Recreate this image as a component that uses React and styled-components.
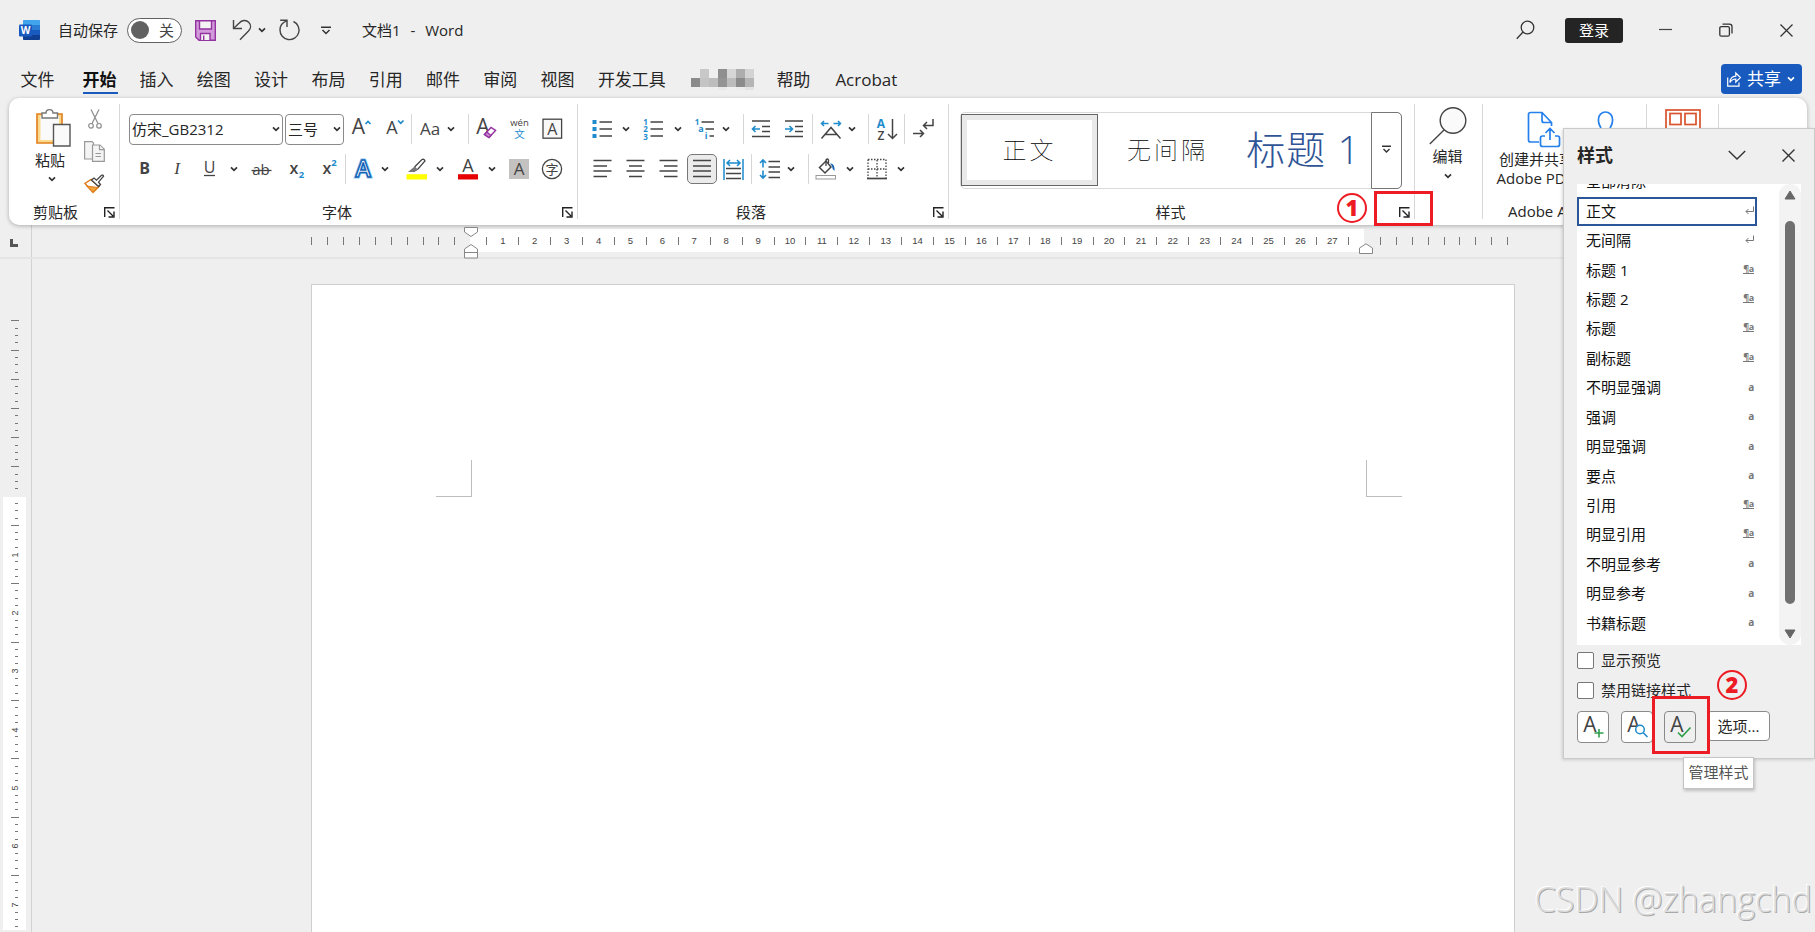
import React from 'react';
import styled, { createGlobalStyle } from 'styled-components';

const GlobalStyle = createGlobalStyle`
  * { box-sizing: border-box; }
  body {
    margin: 0;
    overflow: hidden;
    background: #efefef;
    color: #262626;
    font-family: "Open Sans", "Noto Sans CJK SC", sans-serif;
    font-size: 15px;
  }
  svg { display: block; flex: none; overflow: visible; }
  svg text { font-family: "Open Sans", "Noto Sans CJK SC", sans-serif; }
`

const Window = styled.div`
  position: relative;
  width: 1815px;
  height: 932px;
  overflow: hidden;
  display: flex;
  flex-direction: column;
`
/* keeps an item on its place in a bar: the gap before it and its width */
const Cell = styled.div`
  display: flex;
  flex: none;
  align-items: center;
  justify-content: ${p => p.$start ? 'flex-start' : 'center'};
  margin-left: ${p => p.$ml || 0}px;
  width: ${p => p.$w ? p.$w + 'px' : 'auto'};
  padding-bottom: ${p => p.$up || 0}px;
  white-space: nowrap;
  word-spacing: ${p => p.$wide ? '6px' : 'normal'};
`

const ChevronSvg = ({ w = 8, color = '#333', sw = 1.7 }) => (
  <svg width={w} height={w} viewBox="0 0 8 8">
    <path d="M1 2.4 L4 5.4 L7 2.4" fill="none" stroke={color} strokeWidth={sw} />
  </svg>
)
const Chevron = ({ ml }) => <Cell $ml={ml} $w={8}><ChevronSvg /></Cell>

const Icon = ({ ml, children, size = 22 }) => (
  <Cell $ml={ml} $w={size}>
    <svg width={size} height={size} viewBox={`0 0 ${size} ${size}`} fill="none" stroke="#444" strokeWidth="1.3">
      {children}
    </svg>
  </Cell>
)
const T = ({ x, y, s = 18, c = '#444', w = 400, children, ...rest }) => (
  <text x={x} y={y} fontSize={s} fill={c} fontWeight={w} stroke="none" textAnchor="middle" {...rest}>{children}</text>
)

/* ---------- title bar ---------- */
const TitleRow = styled.div`
  display: flex;
  align-items: center;
  height: 60px;
  flex: none;
`
const Toggle = styled.div`
  display: flex;
  align-items: center;
  justify-content: space-between;
  width: 55px;
  height: 25px;
  margin-left: 9px;
  padding: 0 7px 1px 3px;
  border: 1px solid #616161;
  border-radius: 13px;
  background: #fff;
  color: #444;
  i { width: 18px; height: 18px; margin-top: 1px; border-radius: 50%; background: #616161; }
`
const Login = styled.div`
  width: 58px;
  height: 25px;
  line-height: 24px;
  margin-left: 30px;
  border-radius: 3px;
  background: #242424;
  color: #fff;
  text-align: center;
`

const TitleBar = () => (
  <TitleRow>
    <Cell $ml={19} $w={21}>
      <svg width="21" height="22" viewBox="0 0 21 22">
        <rect x="4" y="1" width="17" height="20" rx="1.5" fill="#185abd" />
        <path d="M4 6.3V2.5Q4 1 5.5 1H19.5Q21 1 21 2.5V6.3Z" fill="#41a5ee" />
        <rect x="4" y="6" width="17" height="5" fill="#2b7cd3" />
        <path d="M4 16H21V19.5Q21 21 19.5 21H5.5Q4 21 4 19.5Z" fill="#103f91" />
        <rect x="0" y="5.5" width="13" height="12" rx="1.2" fill="#185abd" />
        <text x="6.5" y="15" fontSize="10" fontWeight="700" fill="#fff" textAnchor="middle">W</text>
      </svg>
    </Cell>
    <Cell $ml={18} $w={60} $up={2}>自动保存</Cell>
    <Toggle><i />关</Toggle>
    <Cell $ml={13} $w={21}>
      <svg width="21" height="21" viewBox="0 0 21 21" fill="#d29ada" stroke="#9332a0" strokeWidth="1.4">
        <path d="M.7 .7H20.3V20.3H4L.7 17Z" />
        <path d="M4.5 .7H16.5V9H4.5Z" fill="#f3f3f3" />
        <path d="M5.5 20V13.5H15V20" fill="#f3f3f3" />
        <path d="M8.7 15.5V20" />
      </svg>
    </Cell>
    <Cell $ml={16} $w={20}>
      <svg width="20" height="22" viewBox="0 0 20 22" fill="none" stroke="#444" strokeWidth="1.4">
        <path d="M1.5 1V9.5H10" />
        <path d="M1.5 9.5L7 4.2C10 1 14 .6 16.7 3.2C19.3 5.8 19 9.5 16.5 12L8 20.8" />
      </svg>
    </Cell>
    <Chevron ml={6} />
    <Cell $ml={13} $w={21}>
      <svg width="21" height="22" viewBox="0 0 21 22" fill="none" stroke="#444" strokeWidth="1.4">
        <path d="M1.2 1.3H8V8" />
        <path d="M8 1.8C3.5 3.2 1 7 1 11A9.5 9.5 0 1 0 14.5 2.5" />
      </svg>
    </Cell>
    <Cell $ml={21} $w={10}>
      <svg width="10" height="9" viewBox="0 0 10 9" fill="none" stroke="#333" strokeWidth="1.5">
        <path d="M0 1.2H10M1.5 4L5 7.5L8.5 4" />
      </svg>
    </Cell>
    <Cell $ml={31} $w={104} $up={2} $start $wide>文档1 - Word</Cell>
    <Cell $ml={1050} $w={19}>
      <svg width="19" height="20" viewBox="0 0 19 20" fill="none" stroke="#333" strokeWidth="1.3">
        <circle cx="11.5" cy="7.5" r="6.3" /><path d="M7 12L.8 18.8" />
      </svg>
    </Cell>
    <Login>登录</Login>
    <Cell $ml={36} $w={13}><svg width="13" height="2"><path d="M0 .5H13" stroke="#444" strokeWidth="1.2" /></svg></Cell>
    <Cell $ml={47} $w={14}>
      <svg width="14" height="14" viewBox="0 0 14 14" fill="none" stroke="#333" strokeWidth="1.3">
        <rect x=".8" y="3.6" width="9.6" height="9.6" rx="1.5" />
        <path d="M3.5 1.2H10.5Q13 1.2 13 3.6V10.5" />
      </svg>
    </Cell>
    <Cell $ml={47} $w={13}>
      <svg width="13" height="13" viewBox="0 0 13 13" stroke="#333" strokeWidth="1.3"><path d="M.5 .5L12.5 12.5M12.5 .5L.5 12.5" /></svg>
    </Cell>
  </TitleRow>
)

/* ---------- tabs ---------- */
const TabRow = styled.div`
  display: flex;
  height: 38px;
  flex: none;
  font-size: 17px;
  line-height: 40px;
`
const Tab = styled.div`
  margin-left: ${p => p.$ml ?? 23.3}px;
  width: ${p => p.$w || 34}px;
  white-space: nowrap;
  ${p => p.$active && `
    height: 34px;
    border-bottom: 2px solid #185abd;
    font-weight: 700;
    color: #111;
  `}
`
const Mosaic = styled.div`
  display: grid;
  grid-template-columns: repeat(7, 9px);
  grid-auto-rows: 9px;
  margin: 9px 0 0 25.5px;
  i:nth-child(n + 15) { height: 3px; }
`
const mosaicColors = [
  '#efefef', '#c8c8c8', '#efefef', '#8f8f8f', '#d6d6d6', '#adadad', '#d3d3d3',
  '#8b8b8b', '#c4c4c4', '#bdbdbd', '#949494', '#bcbcbc', '#8b8b8b', '#b5b5b5',
  '#efefef', '#efefef', '#efefef', '#e9e9e9', '#efefef', '#ececec', '#e3e3e3',
]
const Share = styled.div`
  display: flex;
  align-items: center;
  width: 81px;
  height: 30px;
  margin: 4px 13px 0 auto;
  padding-left: 6px;
  border-radius: 4px;
  background: #185abd;
  color: #fff;
  line-height: 28px;
  gap: 6px;
`

const TabBar = () => (
  <TabRow>
    <Tab $ml={20.5}>文件</Tab>
    <Tab $ml={28} $w={35} $active>开始</Tab>
    <Tab $ml={22}>插入</Tab>
    {['绘图', '设计', '布局', '引用', '邮件', '审阅', '视图'].map(t => <Tab key={t}>{t}</Tab>)}
    <Tab $w={68}>开发工具</Tab>
    <Mosaic>{mosaicColors.map((c, i) => <i key={i} style={{ background: c }} />)}</Mosaic>
    <Tab $ml={22}>帮助</Tab>
    <Tab $ml={25} $w={70}>Acrobat</Tab>
    <Share>
      <svg width="14" height="15" viewBox="0 0 14 15" fill="none" stroke="#fff" strokeWidth="1.2">
        <path d="M.7 5.5V14.2H12V10.5" />
        <path d="M3 10.5C3.2 6.5 5.5 4.4 8.8 4.2V1L13.4 5.6L8.8 10V7C6 7 4.5 8 3 10.5Z" />
      </svg>
      共享
      <ChevronSvg color="#fff" />
    </Share>
  </TabRow>
)

/* ---------- ribbon ---------- */
const RibbonBox = styled.div`
  display: flex;
  width: 1798px;
  height: 127px;
  flex: none;
  margin-left: 9px;
  padding: 6px 0;
  border-radius: 10px;
  background: #fff;
  box-shadow: 0 1px 4px rgba(0, 0, 0, .28);
  z-index: 1;
`
const Group = styled.div`
  display: flex;
  flex-direction: column;
  flex: none;
  width: ${p => p.$w}px;
  height: 115px;
  border-right: 1px solid #d8d8d8;
`
const Body = styled.div`
  display: flex;
  flex: none;
  flex-direction: ${p => p.$column ? 'column' : 'row'};
  height: 97px;
`
const Footer = styled.div`
  display: flex;
  flex: none;
  align-items: center;
  height: 20px;
  margin-top: ${p => p.$mt || 0}px;
`
const Row = styled.div`
  display: flex;
  align-items: center;
  height: 30px;
  margin-top: ${p => p.$mt}px;
`
const Sep = styled.div`
  width: 1px;
  height: 30px;
  margin-left: ${p => p.$ml}px;
  background: #d6d6d6;
`
const Big = styled.div`
  display: flex;
  flex-direction: column;
  align-items: center;
  flex: none;
  margin-left: ${p => p.$ml}px;
  width: ${p => p.$w}px;
  padding-top: ${p => p.$pt}px;
  line-height: 19px;
  white-space: nowrap;
`
const BigText = styled.span`
  margin-top: ${p => p.$mt || 0}px;
  margin-right: ${p => p.$mr || 0}px;
`
const Combo = styled.div`
  display: flex;
  align-items: center;
  justify-content: space-between;
  width: ${p => p.$w}px;
  height: 31px;
  margin-left: ${p => p.$ml}px;
  padding: 0 2px 1px 2px;
  border: 1px solid #8a8a8a;
  border-radius: 4px;
`
const Pressed = styled.div`
  display: flex;
  align-items: center;
  justify-content: center;
  width: 30px;
  height: 30px;
  margin-left: 7px;
  border: 1px solid #777;
  border-radius: 5px;
  background: #ebebeb;
`
const LauncherCell = styled(Cell)`
  padding-top: 3px;
`

const Launcher = ({ ml }) => (
  <LauncherCell $ml={ml} $w={11}>
    <svg width="11" height="11" viewBox="0 0 11 11" fill="none" stroke="#222" strokeWidth="1.4">
      <path d="M.7 10V.7H10.5M3.5 3.5L9 9M10 4.5V10H4.5" />
    </svg>
  </LauncherCell>
)

const Clipboard = () => (
  <Group $w={111}>
    <Body>
      <Big $ml={24} $w={40} $pt={4}>
        <svg width="36" height="40" viewBox="0 0 36 40" fill="none">
          <path d="M2 6H27V35H2Z" fill="#fbd98d" stroke="#e07d1a" strokeWidth="1.6" />
          <path d="M5.5 8H24V32H5.5Z" fill="#fafafa" />
          <path d="M7 10V5H11C11 .5 18 .5 18 5H22.5V10Z" fill="#fff" stroke="#777" strokeWidth="1.4" />
          <path d="M18.5 16.5H35V38H18.5Z" fill="#fafafa" stroke="#555" strokeWidth="1.4" />
        </svg>
        <BigText $mt={3} $mr={6}>粘贴</BigText>
        <BigText $mt={5} $mr={3}><ChevronSvg /></BigText>
      </Big>
      <Big $ml={11} $w={21} $pt={5}>
        <svg width="14" height="20" viewBox="0 0 14 20" fill="none" stroke="#8c8c8c" strokeWidth="1.2">
          <path d="M3 .5L10 14.5M11 .5L4 14.5" /><circle cx="3" cy="16.8" r="2.3" /><circle cx="11" cy="16.8" r="2.3" />
        </svg>
        <svg width="21" height="21" viewBox="0 0 21 21" fill="#f4f4f4" stroke="#999" strokeWidth="1.2" style={{ marginTop: 12 }}>
          <path d="M.6 .6H8L9.5 2V18H.6Z" />
          <path d="M8.5 4H16L20.3 8.3V20.3H8.5Z" /><path d="M15.5 4V8.7H20M11.5 12.5H17M11.5 15.5H17" />
        </svg>
        <svg width="21" height="20" viewBox="0 0 21 20" fill="none" style={{ marginTop: 12 }}>
          <path d="M7 5.5L1 9.5L9 18.3L15 12.5Z" fill="#fff" stroke="#e07d1a" strokeWidth="1.5" />
          <path d="M2.5 12L13.5 13.5L9 18Z" fill="#f2a33a" stroke="#e07d1a" />
          <path d="M7.5 6L10 4L12.5 6.2L17.5 1.3Q19 .6 19.6 2.2L14.5 8.2L16.5 10.5L14.5 12.5Z" fill="#fff" stroke="#444" strokeWidth="1.3" />
        </svg>
      </Big>
    </Body>
    <Footer><Cell $ml={24} $w={45}>剪贴板</Cell><Launcher ml={26} /></Footer>
  </Group>
)

const FontGroup = () => (
  <Group $w={458}>
    <Body $column>
      <Row $mt={10}>
        <Combo $ml={9} $w={154}>仿宋_GB2312<ChevronSvg /></Combo>
        <Combo $ml={2} $w={59}>三号<ChevronSvg /></Combo>
        <Icon ml={7}><T x={7.5} y={16} s={21}>A</T><path d="M14.5 6L17 3.5L19.5 6" stroke="#1e8bcd" strokeWidth="1.7" /></Icon>
        <Icon ml={12}><T x={7} y={16} s={18}>A</T><path d="M13 2.5L15.8 5.3L18.5 2.5" stroke="#1e8bcd" strokeWidth="1.7" /></Icon>
        <Sep $ml={4} />
        <Icon ml={7}><T x={11} y={17} s={17}>Aa</T></Icon>
        <Chevron ml={6} />
        <Sep $ml={13} />
        <Icon ml={6}>
          <T x={8} y={16} s={21}>A</T>
          <path d="M9.5 16.5L16 9.5L20.5 12.5L14 19.5Z" fill="#fff" stroke="#9332a0" strokeWidth="1.5" />
          <path d="M9.5 16.5L11.8 14L16 17.5L14 19.5Z" fill="#c98bd2" stroke="#9332a0" />
        </Icon>
        <Icon ml={12}><T x={10.5} y={8} s={9.5}>wén</T><T x={10.5} y={20} s={10.5} c="#1e8bcd">文</T></Icon>
        <Icon ml={10}><rect x="2" y="1.2" width="18.6" height="19" fill="#f8f8f8" /><T x={11.3} y={16.5} s={16}>A</T></Icon>
      </Row>
      <Row $mt={10}>
        <Icon ml={13}><T x={11.5} y={16} s={16} w={700}>B</T></Icon>
        <Icon ml={11}><T x={11} y={16} s={17} style={{ fontFamily: 'Liberation Serif', fontStyle: 'italic' }}>I</T></Icon>
        <Icon ml={11}><T x={10.5} y={15} s={16}>U</T><path d="M5 17.5H16" /></Icon>
        <Chevron ml={9} />
        <Icon ml={12}><T x={11} y={16.5} s={15}>ab</T><path d="M1.5 12.5H21.5" /></Icon>
        <Icon ml={14}><T x={8} y={16} s={16} w={600}>x</T><T x={15.5} y={20} s={9.5} w={700} c="#1e8bcd">2</T></Icon>
        <Icon ml={11}><T x={8} y={16} s={16} w={600}>x</T><T x={15} y={7.5} s={9.5} w={700} c="#1e8bcd">2</T></Icon>
        <Sep $ml={4} />
        <Icon ml={6}>
          <text x="11" y="18.5" fontSize="23" fontWeight="600" textAnchor="middle" fill="#fff" stroke="#8cc8f0" strokeWidth="3">A</text>
          <text x="11" y="18.5" fontSize="23" fontWeight="600" textAnchor="middle" fill="#fff" stroke="#1463b5" strokeWidth="1.5">A</text>
        </Icon>
        <Chevron ml={7} />
        <Icon ml={17}>
          <path d="M.5 16.2H21V21.5H.5Z" fill="#ff0" stroke="none" />
          <path d="M9 8.5L16 1.5Q18 .6 19 3L12 11L8 13Z" fill="#fff" />
          <path d="M8.5 8.5L12 11.5L8.5 14H2Z" fill="#777" stroke="none" />
        </Icon>
        <Chevron ml={8} />
        <Icon ml={13}><T x={11} y={14} s={18}>A</T><path d="M1 16.2H21V21.5H1Z" fill="#e60000" stroke="none" /></Icon>
        <Chevron ml={9} />
        <Icon ml={12}><rect x="1" y="1" width="20" height="20" fill="#c4c2c0" stroke="none" /><T x={11} y={17} s={17}>A</T></Icon>
        <Icon ml={11}><circle cx="11" cy="11" r="9.6" /><T x={11} y={16} s={13}>字</T></Icon>
      </Row>
    </Body>
    <Footer><Cell $ml={202} $w={30}>字体</Cell><Launcher ml={210} /></Footer>
  </Group>
)

const blue = '#1e8bcd'
const Paragraph = () => (
  <Group $w={371}>
    <Body $column>
      <Row $mt={10}>
        <Icon ml={13}>
          <path d="M8.5 4H21M8.5 11H21M8.5 18H21" />
          <path d="M1.5 2H5.5V6H1.5ZM1.5 9H5.5V13H1.5ZM1.5 16H5.5V20H1.5Z" fill={blue} stroke="none" />
        </Icon>
        <Chevron ml={9} />
        <Icon ml={12}>
          <path d="M8.5 4H21M8.5 11H21M8.5 18H21" />
          <T x={3.5} y={7} s={8} w={700} c={blue}>1</T><T x={3.5} y={14} s={8} w={700} c={blue}>2</T><T x={3.5} y={21.5} s={8} w={700} c={blue}>3</T>
        </Icon>
        <Chevron ml={10} />
        <Icon ml={12}>
          <path d="M7.5 4H20M11.5 11H20M15.5 18H20" />
          <T x={3} y={7} s={8} w={700} c={blue}>1</T><T x={7} y={14} s={9} w={700} c={blue}>a</T><T x={12} y={21} s={9} w={700} c={blue}>i</T>
        </Icon>
        <Chevron ml={6} />
        <Sep $ml={13} />
        <Icon ml={6}>
          <path d="M2 3H20M12 8.5H20M12 13.5H20M2 18.5H20" /><path d="M10 11H2.5M5.5 8L2.5 11L5.5 14" stroke={blue} strokeWidth="1.6" />
        </Icon>
        <Icon ml={11}>
          <path d="M2 3H20M12 8.5H20M12 13.5H20M2 18.5H20" /><path d="M2 11H9.5M6.5 8L9.5 11L6.5 14" stroke={blue} strokeWidth="1.6" />
        </Icon>
        <Sep $ml={7} />
        <Icon ml={7}>
          <path d="M1.5 20.5L11 9.5L20.5 20.5M5 16.5H17" strokeWidth="1.5" />
          <path d="M8.5 5.5H1.5M4 3L1.5 5.5L4 8M13.5 5.5H20.5M18 3L20.5 5.5L18 8" stroke={blue} strokeWidth="1.5" />
        </Icon>
        <Chevron ml={6} />
        <Sep $ml={12} />
        <Icon ml={6}>
          <T x={6} y={9.5} s={12} w={700} c={blue}>A</T><T x={6} y={21.5} s={12} w={600}>Z</T>
          <path d="M17.5 1V20.5M13 16L17.5 20.5L22 16" strokeWidth="1.5" />
        </Icon>
        <Sep $ml={7} />
        <Icon ml={7}>
          <path d="M21 1V7.5H11.5M15 4L11.5 7.5L15 11M1 15.500H11.5M8 12L11.5 15.500L8 19" strokeWidth="1.5" />
        </Icon>
      </Row>
      <Row $mt={10}>
        <Icon ml={14}><path d="M1.5 2.5H19.5M1.5 8H15M1.5 13H19.5M1.5 18.5H15" /></Icon>
        <Icon ml={11}><path d="M1.5 2.5H19.5M4 8H17M1.5 13H19.5M4 18.5H17" /></Icon>
        <Icon ml={11}><path d="M1.5 2.5H19.5M6 8H19.5M1.5 13H19.5M6 18.5H19.5" /></Icon>
        <Pressed><Icon><path d="M2 2.5H20M2 8H20M2 13H20M2 18.5H20" /></Icon></Pressed>
        <Icon ml={6}>
          <path d="M3 10.5H18M3 15.5H18M3 20.5H18" /><path d="M1 1V22M20 1V22M4 5H17M7 2L4 5L7 8M14 2L17 5L14 8" stroke={blue} strokeWidth="1.5" />
        </Icon>
        <Sep $ml={6} />
        <Icon ml={7}>
          <path d="M9.5 3.5H21M9.5 9H21M9.5 14H21M9.5 19.5H21" />
          <path d="M4 2V9.5M1 5L4 2L7 5M4 12.5V20M1 17L4 20L7 17" stroke={blue} strokeWidth="1.6" />
        </Icon>
        <Chevron ml={6} />
        <Sep $ml={13} />
        <Icon ml={6}>
          <path d="M4.5 9.5L11 3L16 9L10 15Z" fill="#fff" strokeWidth="1.5" /><path d="M11 8V2Q12.5 0 13.5 2V5" />
          <path d="M15 5.5Q20 5 19.5 13Q17 11 17 8Z" fill="#1463b5" stroke="none" />
          <rect x="1" y="17.5" width="19.5" height="3.5" fill="#fff" stroke="#999" strokeWidth="1" />
        </Icon>
        <Chevron ml={9} />
        <Icon ml={12}>
          <path d="M2 1.5H20V20M2 1.5V20M11 2V19M2 11H20" strokeDasharray="1.5 1.5" /><path d="M1 20.5H21" strokeWidth="1.7" />
        </Icon>
        <Chevron ml={9} />
      </Row>
    </Body>
    <Footer><Cell $ml={158} $w={30}>段落</Cell><Launcher ml={167} /></Footer>
  </Group>
)

const Gallery = styled.div`
  display: flex;
  flex: none;
  width: 442px;
  height: 77px;
  margin: 8px 0 0 11px;
  border: 1px solid #d9d9d9;
  border-radius: 5px;
`
const StyleTile = styled.div`
  display: flex;
  flex: none;
  align-items: center;
  justify-content: center;
  width: ${p => p.$w}px;
  height: 72px;
  margin-top: 1px;
  padding-bottom: ${p => p.$heading ? 7 : 3}px;
  font-size: ${p => p.$heading ? 39 : 24}px;
  font-weight: ${p => p.$heading ? 300 : 100};
  letter-spacing: ${p => p.$heading ? 1 : 3}px;
  color: ${p => p.$heading ? '#2f5496' : '#000'};
  white-space: nowrap;
  ${p => p.$selected && `
    border: 1px solid #666;
    box-shadow: inset 0 0 0 5px #e9e9e9;
  `}
`
const More = styled.div`
  display: flex;
  align-items: center;
  justify-content: center;
  width: 31px;
  height: 77px;
  margin: -1px -1px 0 auto;
  padding-bottom: 2px;
  border: 1px solid #777;
  border-radius: 0 5px 5px 0;
`

const Styles = () => (
  <Group $w={466}>
    <Gallery>
      <StyleTile $w={137} $selected>正文</StyleTile>
      <StyleTile $w={139}>无间隔</StyleTile>
      <StyleTile $w={133} $heading>标题 1</StyleTile>
      <More>
        <svg width="9" height="9" viewBox="0 0 9 9" fill="none" stroke="#333" strokeWidth="1.4"><path d="M0 1.2H9M1.5 4L4.5 7L7.5 4" /></svg>
      </More>
    </Gallery>
    <Footer $mt={12}><Cell $ml={206} $w={31}>样式</Cell><Launcher ml={213} /></Footer>
  </Group>
)

const RightGroups = () => (
  <>
    <Group $w={68}>
      <Big $ml={14} $w={38} $pt={3}>
        <svg width="38" height="38" viewBox="0 0 38 38" fill="none" stroke="#444" strokeWidth="1.4">
          <circle cx="24" cy="13.5" r="12.8" fill="#fafafa" /><path d="M15 23L.8 37" />
        </svg>
        <BigText $mt={2} $mr={1}>编辑</BigText>
        <BigText $mt={6}><ChevronSvg /></BigText>
      </Big>
    </Group>
    <Group $w={164}>
      <Body>
        <Big $ml={8} $w={106} $pt={7}>
          <svg width="34" height="37" viewBox="0 0 34 37" fill="none" stroke="#2680eb" strokeWidth="1.7">
            <path d="M12 31H3.5Q1.5 31 1.5 29V3.5Q1.5 1.500 3.5 1.5H15L24.5 11.5V15M15 1.5V9.5Q15 11.5 17 11.5H24.5" />
            <path d="M18 25H15.5Q13.5 25 13.5 27V33.5Q13.5 35.5 15.5 35.5H30.5Q32.5 35.5 32.5 33.5V27Q32.5 25 30.5 25H28M23 29V18M18.5 22L23 17.5L27.5 22" />
          </svg>
          <BigText $mt={2}>创建并共享的</BigText>
          <BigText $mr={18}>Adobe PDF</BigText>
        </Big>
        <svg width="17" height="36" viewBox="0 0 17 36" fill="none" stroke="#2680eb" strokeWidth="1.7" style={{ marginTop: 7 }}>
          <path d="M4 17Q1 12 1.5 8A7 7 0 0 1 15.5 8Q16 12 13 17" />
        </svg>
      </Body>
      <Footer><Cell $ml={25}>Adobe Acrobat</Cell></Footer>
    </Group>
    <Group $w={72}>
      <Cell $ml={18} $w={36}>
        <svg width="36" height="40" viewBox="0 0 36 40" fill="none" stroke="#d9532c" strokeWidth="1.7" style={{ marginTop: 5 }}>
          <rect x="1" y="1" width="34" height="36" /><rect x="5" y="4.5" width="11" height="11" /><rect x="20" y="4.5" width="11" height="11" />
        </svg>
      </Cell>
    </Group>
  </>
)

const Ribbon = () => (
  <RibbonBox>
    <Clipboard />
    <FontGroup />
    <Paragraph />
    <Styles />
    <RightGroups />
  </RibbonBox>
)

/* ---------- workspace ---------- */
const Workspace = styled.div`
  display: flex;
  flex-direction: column;
  flex: 1;
  min-height: 0;
`
const TopRuler = styled.div`
  display: flex;
  height: 34px;
  flex: none;
  border-bottom: 2px solid #e4e4e4;
`
const Corner = styled.div`
  width: 32px;
  border-right: 1px solid #d2d2d2;
  padding: 14px 0 0 10px;
  i {
    display: block;
    width: 8px;
    height: 8px;
    border-left: 3px solid #555;
    border-bottom: 3px solid #555;
  }
`
const Scale = styled.div`
  display: flex;
  align-items: center;
  width: 1240px;
  height: 23px;
  margin: 4px 0 0 271.4px;
  background: linear-gradient(to right, transparent 167px, #fff 167px, #fff 1061px, transparent 1061px);
`
const Mark = styled.div`
  display: flex;
  justify-content: center;
  flex: none;
  width: 15.966px;
  font: 9.5px "Liberation Sans", sans-serif;
  color: #444;
  i { width: 1px; height: 8px; background: #777; }
`
const Indent = styled.svg`
  position: absolute;
  left: ${p => p.$x}px;
  top: ${p => p.$y}px;
  z-index: 1;
`
const Canvas = styled.div`
  display: flex;
  flex: 1;
  min-height: 0;
`
const SideRuler = styled.div`
  width: 32px;
  padding: 58.35px 0 0 3px;
  border-right: 1px solid #d2d2d2;
  overflow: hidden;
`
const SideScale = styled.div`
  width: 23px;
  background: linear-gradient(to bottom, transparent 179.65px, #fff 179.65px);
`
const SideMark = styled.div`
  display: flex;
  align-items: center;
  justify-content: center;
  height: 7.306px;
  font: 9px "Liberation Sans", sans-serif;
  color: #444;
  i { width: ${p => p.$long ? 8 : 3}px; height: 1px; margin-left: ${p => p.$long ? 1 : 3}px; background: #777; }
  span { transform: rotate(-90deg); }
`
const Page = styled.div`
  display: flex;
  justify-content: space-between;
  width: 1204px;
  margin: 25px 0 0 279px;
  padding: 175px 112px 0 124px;
  border: 1px solid #cfcfcf;
  border-bottom: 0;
  background: #fff;
`
const MarginCorner = styled.div`
  width: 36px;
  height: 37px;
  border-bottom: 1px solid #bdbdbd;
  ${p => p.$right ? 'border-left' : 'border-right'}: 1px solid #bdbdbd;
`

const topMarks = Array.from({ length: 76 }, (_, i) => i - 10)
const sideMarks = Array.from({ length: 84 }, (_, i) => i - 24)

const topLabel = n => {
  if (n === 0 || n === 56) return null
  return n > 0 && n < 56 && n % 2 === 0 ? n / 2 : <i />
}

const Document = () => (
  <Workspace>
    <TopRuler>
      <Corner><i /></Corner>
      <Scale>{topMarks.map(n => <Mark key={n}>{topLabel(n)}</Mark>)}</Scale>
    </TopRuler>
    <Canvas>
      <SideRuler>
        <SideScale>
          {sideMarks.map(n => (
            <SideMark key={n} $long={n % 4 === 0}>
              {n > 0 && n % 8 === 0 ? <span>{n / 8}</span> : n !== 0 && <i />}
            </SideMark>
          ))}
        </SideScale>
      </SideRuler>
      <Page><MarginCorner /><MarginCorner $right /></Page>
    </Canvas>
    <Indent $x={464} $y={227} width="14" height="32" fill="#fff" stroke="#888">
      <path d="M.5 .5H13.5V5L7 9.5L.5 5Z" /><path d="M.5 31V22L7 17.5L13.5 22V31ZM.5 25.5H13.5" />
    </Indent>
    <Indent $x={1359} $y={243} width="14" height="11" fill="#fff" stroke="#888"><path d="M.5 10.5V5L7 .8L13.5 5V10.5Z" /></Indent>
  </Workspace>
)

/* ---------- styles pane, floats above the document ---------- */
const Pane = styled.div`
  position: absolute;
  z-index: 2;
  left: 1563px;
  top: 128px;
  width: 252px;
  height: 631px;
  padding: 0 13px;
  border: 1px solid #cacaca;
  background: #efefef;
  box-shadow: -1px 1px 3px rgba(0, 0, 0, .15);
`
const PaneHead = styled.div`
  display: flex;
  align-items: center;
  height: 55px;
  padding-bottom: 3px;
  font-size: 18px;
  font-weight: 700;
`
const ListBox = styled.div`
  display: flex;
  justify-content: space-between;
  width: 224px;
  height: 461px;
  overflow: hidden;
  background: #fff;
`
const List = styled.div`
  width: 180px;
  margin-top: -16.4px;
`
const StyleItem = styled.div`
  display: flex;
  align-items: center;
  justify-content: space-between;
  height: 29.43px;
  padding: 0 3px 3px 9px;
  color: #111;
  ${p => p.$selected && `
    padding: 0 1px 2px 7px;
    border: 2px solid #2b579a;
  `}
`
const Kind = styled.span`
  color: #777;
  font: 700 10px "Open Sans", sans-serif;
  letter-spacing: -.3px;
  line-height: 8px;
  ${p => p.$linked && `
    font-size: 9px;
    border-bottom: 1px solid #777;
  `}
`
const Scrollbar = styled.div`
  display: flex;
  flex-direction: column;
  align-items: center;
  width: 22px;
  height: 461px;
  padding: 6px 0 5px;
  border-radius: 11px;
  background: #f3f3f3;
  i { width: 10px; height: 383px; margin: 21px 0 25px; border-radius: 5px; background: #707070; }
`
const Check = styled.div`
  display: flex;
  align-items: center;
  height: 30.5px;
  padding-bottom: 2px;
  gap: 7px;
  i { width: 17px; height: 17px; margin-top: 2px; border: 1px solid #777; border-radius: 2px; background: #fff; }
`
const PaneButtons = styled.div`
  display: flex;
  margin-top: 5px;
`
const PaneButton = styled.div`
  display: flex;
  align-items: center;
  justify-content: center;
  flex: none;
  width: ${p => p.$w || 32}px;
  height: ${p => p.$w ? 30 : 32}px;
  margin-left: ${p => p.$ml || 0}px;
  padding-bottom: ${p => p.$w ? 2 : 0}px;
  border: 1px solid #8a8a8a;
  border-radius: 4px;
  background: ${p => p.$hover ? '#efefef' : '#fff'};
`

const styleItems = [
  ['全部清除'], ['正文', 'p'], ['无间隔', 'p'], ['标题 1', 'l'], ['标题 2', 'l'], ['标题', 'l'], ['副标题', 'l'],
  ['不明显强调', 'a'], ['强调', 'a'], ['明显强调', 'a'], ['要点', 'a'], ['引用', 'l'], ['明显引用', 'l'],
  ['不明显参考', 'a'], ['明显参考', 'a'], ['书籍标题', 'a'],
]
const KindMark = ({ kind }) => {
  if (kind === 'p') return (
    <svg width="9" height="9" viewBox="0 0 9 9" fill="none" stroke="#777"><path d="M8.5 .5V5.5H1M3.5 3L1 5.5L3.5 8" /></svg>
  )
  if (kind === 'l') return <Kind $linked>¶a</Kind>
  return kind ? <Kind>a</Kind> : null
}

const StylesPane = () => (
  <Pane>
    <PaneHead>
      <Cell $w={36} $up={2}>样式</Cell>
      <Cell $ml={115} $w={18}>
        <svg width="18" height="10" viewBox="0 0 18 10" fill="none" stroke="#333" strokeWidth="1.4"><path d="M.8 1L9 9L17.2 1" /></svg>
      </Cell>
      <Cell $ml={36} $w={13}>
        <svg width="13" height="13" viewBox="0 0 13 13" stroke="#333" strokeWidth="1.4"><path d="M.5 .5L12.5 12.5M12.5 .5L.5 12.5" /></svg>
      </Cell>
    </PaneHead>
    <ListBox>
      <List>
        {styleItems.map(([name, kind]) => (
          <StyleItem key={name} $selected={name === '正文'}>{name}<KindMark kind={kind} /></StyleItem>
        ))}
      </List>
      <Scrollbar>
        <svg width="12" height="10"><path d="M6 1L11 9H1Z" fill="#666" stroke="#666" strokeLinejoin="round" /></svg>
        <i />
        <svg width="12" height="10"><path d="M6 9L11 1H1Z" fill="#666" stroke="#666" strokeLinejoin="round" /></svg>
      </Scrollbar>
    </ListBox>
    <Check><i />显示预览</Check>
    <Check><i />禁用链接样式</Check>
    <PaneButtons>
      <PaneButton><Icon size={24}><T x={9} y={17} s={21}>A</T><path d="M18 14V22.5M13.5 18H22.5" stroke="#2d9f4a" strokeWidth="1.6" /></Icon></PaneButton>
      <PaneButton $ml={12}><Icon size={24}><T x={9} y={17} s={21}>A</T><circle cx="15" cy="14.5" r="4.3" fill="#fff" stroke={blue} strokeWidth="1.5" /><path d="M18 17.5L22.5 22" stroke={blue} strokeWidth="1.6" /></Icon></PaneButton>
      <PaneButton $ml={11} $hover><Icon size={24}><T x={9} y={17} s={21}>A</T><path d="M10 17.5L14 21.5L22.5 12.5" stroke="#2d9f4a" strokeWidth="1.6" /></Icon></PaneButton>
      <PaneButton $ml={11} $w={63}>选项...</PaneButton>
    </PaneButtons>
  </Pane>
)

/* ---------- annotations ---------- */
const RedBox = styled.div`
  position: absolute;
  z-index: 3;
  left: ${p => p.$x}px;
  top: ${p => p.$y}px;
  width: ${p => p.$w}px;
  height: ${p => p.$h}px;
  border: 3px solid #ed1c24;
`
const Step = styled.div`
  position: absolute;
  z-index: 3;
  left: ${p => p.$x}px;
  top: ${p => p.$y}px;
  width: 30px;
  height: 30px;
  border: 2.5px solid #ed1c24;
  border-radius: 50%;
  color: #ed1c24;
  font-size: 22px;
  font-weight: 800;
  line-height: 24px;
  text-align: center;
`
const Tooltip = styled.div`
  position: absolute;
  z-index: 3;
  left: 1683px;
  top: 757px;
  width: 71px;
  height: 32px;
  line-height: 29px;
  border: 1px solid #c4c4c4;
  background: #fff;
  color: #555;
  text-align: center;
  box-shadow: 1px 2px 3px rgba(0, 0, 0, .2);
`
const Watermark = styled.div`
  position: absolute;
  z-index: 3;
  right: 3px;
  bottom: 10px;
  font: 300 34.3px "Open Sans", sans-serif;
  white-space: nowrap;
  color: #dcdcdc;
  text-shadow: 1px 1px 0 #a8a8a8, -1px -1px 0 #fff;
`

function App() {
  return (
    <Window>
      <GlobalStyle />
      <TitleBar />
      <TabBar />
      <Ribbon />
      <Document />
      <StylesPane />
      <RedBox $x={1374} $y={191} $w={59} $h={35} />
      <Step $x={1337} $y={193}>1</Step>
      <RedBox $x={1652} $y={696} $w={58} $h={58} />
      <Step $x={1717} $y={670}>2</Step>
      <Tooltip>管理样式</Tooltip>
      <Watermark>CSDN @zhangchd</Watermark>
    </Window>
  )
}

export default App;
